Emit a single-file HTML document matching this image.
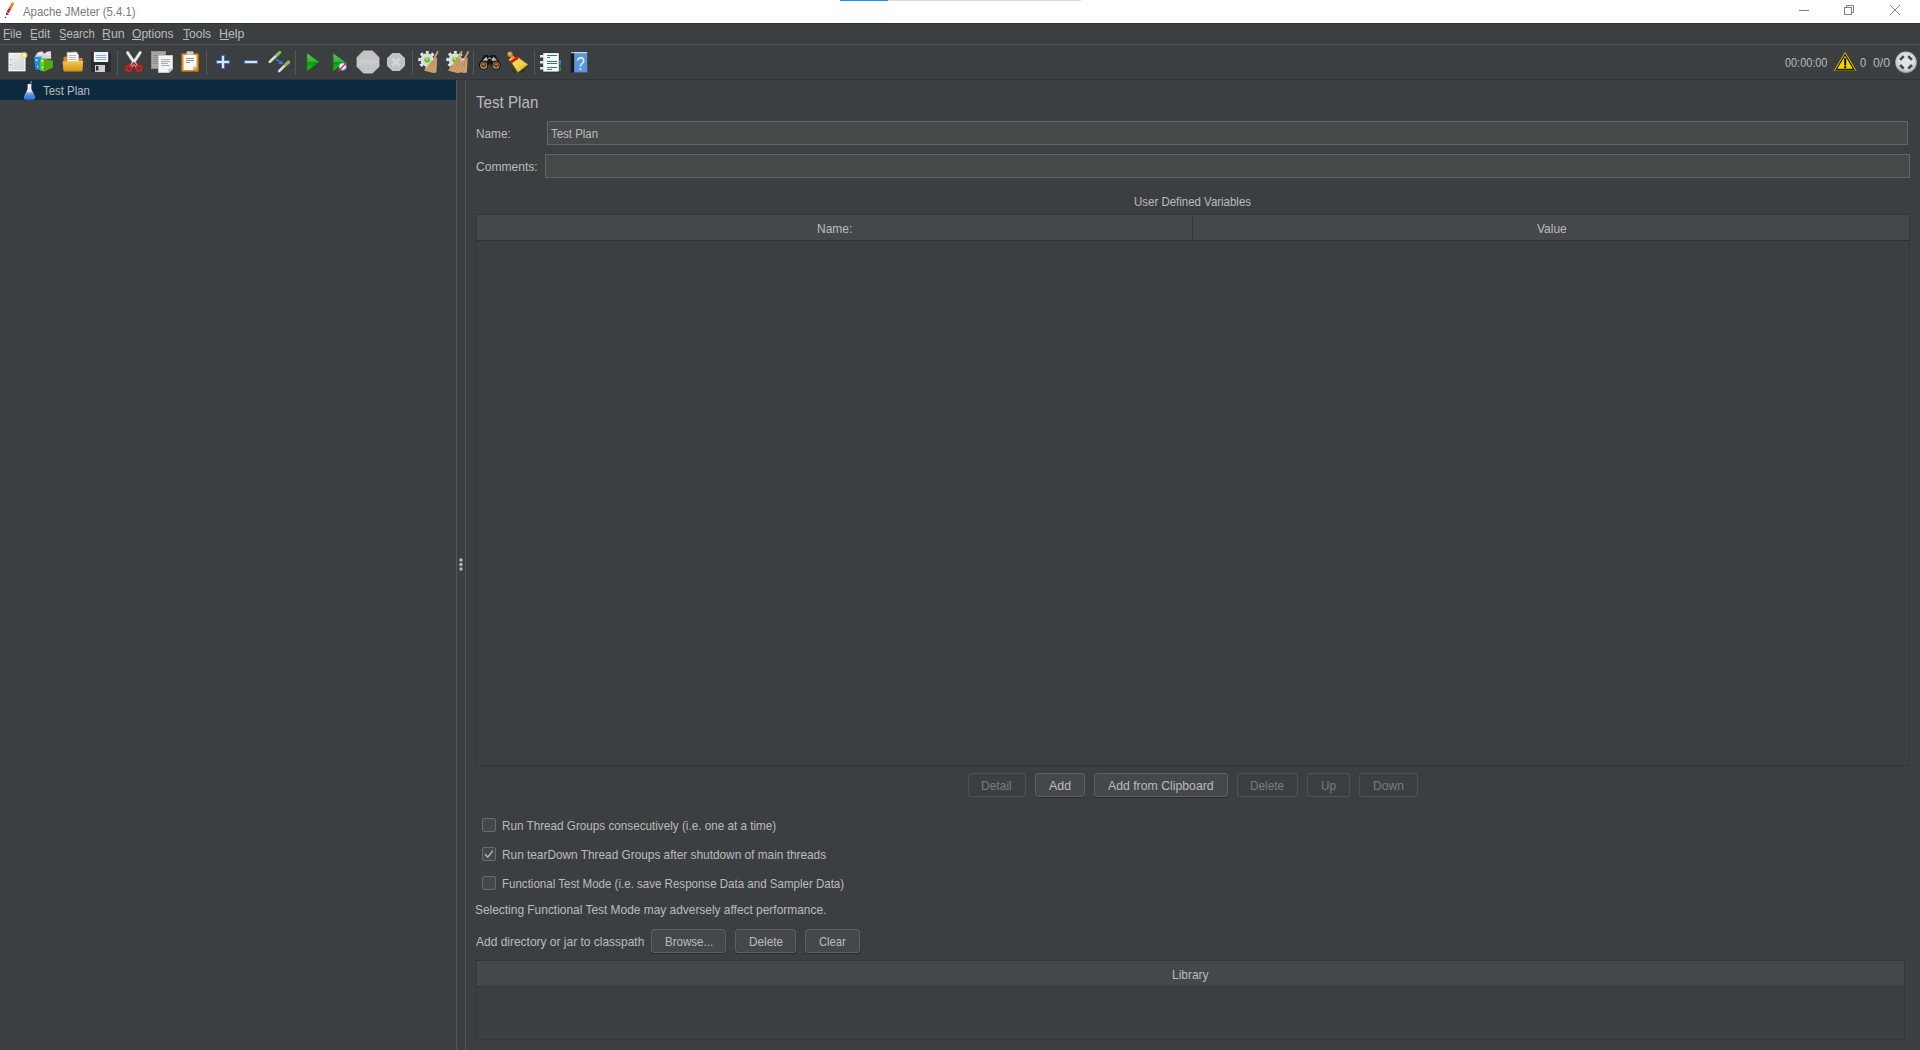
<!DOCTYPE html>
<html><head><meta charset="utf-8">
<style>
*{margin:0;padding:0;box-sizing:border-box}
html,body{width:1920px;height:1050px;overflow:hidden;background:#3C3F41;font-family:"Liberation Sans",sans-serif;font-size:13px;color:#BBBBBB}
.a{position:absolute}
.t{position:absolute;white-space:pre;line-height:1;transform-origin:0 0}
.btn{position:absolute;height:24px;border:1px solid #5E6060;border-radius:3px;background:#45484A;box-shadow:0 1px 1px rgba(0,0,0,.3)}
.btn.dis{border-color:#4F5254;background:#3C3F41;box-shadow:none}
.fld{position:absolute;height:24px;border:1px solid #646464;background:#45494A}
.tbl{position:absolute;border:1px solid #35383A;background:#3C3F41}
.hdr{position:absolute;left:0;top:0;right:0;height:26px;background:#45484B;border-bottom:1px solid #323538}
.cb{position:absolute;width:14px;height:14px;border:1px solid #6B6B6B;border-radius:2px;background:#43494A}
.sep{position:absolute;width:1px;height:25px;top:50px;background:#555759}
.ul{position:absolute;height:1px;top:39px;background:#BBBBBB}
</style></head><body>
<div class="a" style="left:0;top:0;width:1920px;height:23px;background:#fff"></div>
<div class="a" style="left:840px;top:0;width:48px;height:1px;background:#2090FF"></div>
<div class="a" style="left:888px;top:0;width:193px;height:1px;background:#DEDEDE"></div>
<div class="a" style="left:0;top:23px;width:1920px;height:1px;background:#2F3235"></div>
<div class="a" style="left:0;top:44px;width:1920px;height:1px;background:#515354"></div>
<div class="a" style="left:0;top:79px;width:1920px;height:1px;background:#323538"></div>
<div class="ul" style="left:4px;width:6px"></div>
<div class="ul" style="left:31px;width:6px"></div>
<div class="ul" style="left:60px;width:6px"></div>
<div class="ul" style="left:103px;width:7px"></div>
<div class="ul" style="left:132px;width:9px"></div>
<div class="ul" style="left:183px;width:6px"></div>
<div class="ul" style="left:220px;width:9px"></div>
<div class="sep" style="left:117px"></div>
<div class="sep" style="left:206px"></div>
<div class="sep" style="left:295px"></div>
<div class="sep" style="left:412px"></div>
<div class="sep" style="left:473px"></div>
<div class="sep" style="left:534px"></div>
<div class="a" style="left:0;top:80px;width:456px;height:20px;background:#0D293E"></div>
<div class="a" style="left:456px;top:80px;width:1px;height:970px;background:#555758"></div>
<div class="a" style="left:465px;top:80px;width:1px;height:970px;background:#555758"></div>
<div class="fld" style="left:547px;top:121px;width:1361px"></div>
<div class="fld" style="left:545px;top:154px;width:1365px"></div>
<div class="tbl" style="left:476px;top:214px;width:1434px;height:552px"><div class="hdr"></div></div>
<div class="a" style="left:1192px;top:215px;width:1px;height:25px;background:#33363A"></div>
<div class="btn dis" style="left:968px;top:773px;width:58px"></div>
<div class="btn" style="left:1035px;top:773px;width:50px"></div>
<div class="btn" style="left:1094px;top:773px;width:134px"></div>
<div class="btn dis" style="left:1237px;top:773px;width:61px"></div>
<div class="btn dis" style="left:1307px;top:773px;width:43px"></div>
<div class="btn dis" style="left:1359px;top:773px;width:59px"></div>
<div class="cb" style="left:482px;top:818px"></div>
<div class="cb" style="left:482px;top:847px"></div>
<div class="cb" style="left:482px;top:876px"></div>
<svg class="a" style="left:482px;top:847px" width="14" height="14"><path d="M3 7.2 L5.8 10.2 L10.8 3.6" fill="none" stroke="#B5B5B5" stroke-width="1.5"/></svg>
<div class="btn" style="left:651px;top:929px;width:75px"></div>
<div class="btn" style="left:735px;top:929px;width:61px"></div>
<div class="btn" style="left:805px;top:929px;width:55px"></div>
<div class="tbl" style="left:476px;top:960px;width:1429px;height:80px"><div class="hdr"></div></div>
<svg class="a" style="left:0;top:0" width="1920" height="600" viewBox="0 0 1920 600">
<defs>
<linearGradient id="gPlay" x1="0" y1="0" x2="0" y2="1"><stop offset="0" stop-color="#6CC46C"/><stop offset="0.5" stop-color="#30B030"/><stop offset="0.52" stop-color="#0A9A0A"/><stop offset="1" stop-color="#10D010"/></linearGradient>
<linearGradient id="gFold" x1="0" y1="0" x2="0" y2="1"><stop offset="0" stop-color="#F6C65A"/><stop offset="1" stop-color="#D99410"/></linearGradient>
<linearGradient id="gDoc" x1="0" y1="0" x2="1" y2="1"><stop offset="0" stop-color="#EDEDED"/><stop offset="1" stop-color="#D4D4D4"/></linearGradient>
<radialGradient id="gBall" cx="0.5" cy="0.45" r="0.55"><stop offset="0" stop-color="#E6E6E6"/><stop offset="0.6" stop-color="#E0E0E0"/><stop offset="0.85" stop-color="#C4C4C4"/><stop offset="1" stop-color="#7A7C7E"/></radialGradient>
<linearGradient id="gBroom" x1="0" y1="0" x2="1" y2="1"><stop offset="0" stop-color="#FFF07A"/><stop offset="1" stop-color="#D8B000"/></linearGradient>
</defs>
<!-- title feather -->
<path d="M6 12.3 L9.2 14.6 L6.2 15.2 Z" fill="#6E1C86"/>
<path d="M7.6 12.6 L10.8 7.2" stroke="#D21E3C" stroke-width="2.6"/>
<path d="M10.4 8 L12.6 3.6" stroke="#F47A1E" stroke-width="2.5" stroke-linecap="round"/>
<circle cx="5.5" cy="17.4" r="0.7" fill="#3C1A80"/>
<!-- window controls -->
<rect x="1799" y="10" width="10" height="1" fill="#7E7E7E"/>
<rect x="1844.5" y="7.5" width="7" height="7" fill="none" stroke="#7E7E7E" stroke-width="1"/>
<path d="M1846.5 7 V5.5 H1853.5 V12.5 H1852" fill="none" stroke="#7E7E7E" stroke-width="1"/>
<path d="M1890 5 L1900 15 M1900 5 L1890 15" stroke="#7E7E7E" stroke-width="0.9"/>
<!-- 1 new -->
<rect x="9.1" y="53.4" width="15.8" height="17.3" fill="url(#gDoc)" stroke="#FAFAFA" stroke-width="1.3"/>
<circle cx="10.6" cy="59.5" r="0.6" fill="#777"/><circle cx="10.6" cy="64.5" r="0.6" fill="#777"/>
<circle cx="24.3" cy="55.3" r="2.3" fill="#F4F2FF" stroke="#EEDC60" stroke-width="1.5" opacity="0.95"/>
<!-- 2 templates -->
<path d="M35 56.5 L37.5 52.5 L42 51.3 L44.5 53.5 L47.5 51.5 L51 51.3 L51.2 58.8 L35 58.8 Z" fill="#D6D6DA"/>
<path d="M38 53.5 L41 52.6 M39 55 L42 54 M46 53 L49.5 52.5 M46.5 55 L50 54.2" stroke="#F4F4F4" stroke-width="0.9"/>
<path d="M34 57 L41.6 56.4 L40.6 70 L35.6 69.6 Z" fill="#1A8EE0"/>
<rect x="35.6" y="59.4" width="2" height="1.6" fill="#D8ECFA"/><circle cx="37.6" cy="66.5" r="0.75" fill="#F0F8FF"/>
<path d="M40.2 58.6 L44.6 58.8 L44.6 71.6 L40.2 70.6 Z" fill="#74CC10"/>
<path d="M44.6 58.8 L52.9 60.8 L52.9 67.6 L44.6 71.6 Z" fill="#4EAE12"/>
<rect x="41.5" y="60.2" width="1.8" height="1.8" fill="#E8F8D8"/><circle cx="42.5" cy="67.5" r="0.8" fill="#FFFFFF"/>
<!-- 3 open -->
<path d="M63.5 57 L69 56 L71 58 L82.5 58 L82.5 70 L63.5 70 Z" fill="#D49210"/>
<path d="M67 52.5 L76.5 52 L78.5 55 L78.5 63 L67.5 63 Z" fill="#F6F6F6" stroke="#BDBDBD" stroke-width="0.6"/>
<path d="M69 55.5 H76 M69 57.5 H76 M69 59.5 H76" stroke="#AAAAAA" stroke-width="0.8"/>
<path d="M62.5 61.5 L83.2 61 L82.2 71.5 L63.8 71.5 Z" fill="url(#gFold)"/>
<!-- 4 save -->
<rect x="91" y="52" width="20" height="20" rx="1" fill="#2C2C2C"/>
<rect x="93.8" y="52" width="14.4" height="10" fill="#EEF3F8"/>
<path d="M96 55.5 H106 M96 57.5 H106 M96 59.5 H106" stroke="#86A6CC" stroke-width="0.9"/>
<rect x="95" y="65" width="10" height="7" fill="#CFCFCF"/>
<rect x="96" y="66" width="2.4" height="4.5" fill="#2E2E2E"/>
<!-- 5 cut -->
<path d="M127.6 52.6 L136.6 66.2" stroke="#9C9C9C" stroke-width="3.4" stroke-linecap="round"/>
<path d="M140.2 52.6 L131.2 66.2" stroke="#9C9C9C" stroke-width="3.4" stroke-linecap="round"/>
<path d="M127.6 52.6 L136.6 66.2" stroke="#EEEEEE" stroke-width="2.2" stroke-linecap="round"/>
<path d="M140.2 52.6 L131.2 66.2" stroke="#EEEEEE" stroke-width="2.2" stroke-linecap="round"/>
<circle cx="128.9" cy="68.3" r="2.7" fill="none" stroke="#E41616" stroke-width="1.9"/>
<circle cx="138.9" cy="68.3" r="2.7" fill="none" stroke="#E41616" stroke-width="1.9"/>
<path d="M131.5 65.5 L133.9 63 L136.3 65.5" fill="none" stroke="#D01010" stroke-width="1.6"/>
<!-- 6 copy -->
<rect x="151.5" y="51.5" width="14" height="17" fill="#A6A6A6" stroke="#8E8E8E" stroke-width="1"/>
<path d="M153 55.5 H163 M153 57.5 H163 M153 59.5 H163 M153 61.5 H163 M153 63.5 H163" stroke="#8C8C8C" stroke-width="1"/>
<path d="M158.5 55.5 H172.5 V69 L169 72.5 H158.5 Z" fill="#F4F4F4" stroke="#C8C8C8" stroke-width="1"/>
<path d="M161 59.5 H170 M161 61.5 H170 M161 63.5 H168 M161 65.5 H170" stroke="#ABABAB" stroke-width="1"/>
<path d="M169 72.5 L169 69 L172.5 69" fill="#D8D8D8" stroke="#B0B0B0" stroke-width="0.8"/>
<!-- 7 paste -->
<rect x="181.5" y="53.5" width="17" height="18" rx="1" fill="#D8901E" stroke="#A46A00" stroke-width="1"/>
<path d="M183.5 55 H196.5 V67 L193.5 70 H183.5 Z" fill="#F8F8F8"/>
<path d="M186 58.5 H194 M186 60.5 H194 M186 62.5 H190" stroke="#8E8E8E" stroke-width="1"/>
<path d="M193.5 70 V67 H196.5" fill="#DADADA" stroke="#A8A8A8" stroke-width="0.8"/>
<rect x="186.5" y="51.2" width="7" height="3.8" rx="1" fill="#C8C8BE"/>
<!-- 8 plus -->
<path d="M221.5 55.5 H224.5 V60.5 H229.5 V63.5 H224.5 V68.5 H221.5 V63.5 H216.5 V60.5 H221.5 Z" fill="#DCE6F6" stroke="#3A6EC2" stroke-width="1"/>
<!-- 9 minus -->
<rect x="244.5" y="60.5" width="13" height="3" fill="#DCE6F6" stroke="#3A6EC2" stroke-width="1"/>
<!-- 10 toggle -->
<path d="M269.8 61.8 L277 55" stroke="#DADADA" stroke-width="2.6" stroke-linecap="round"/>
<path d="M276.8 55.2 L279.8 52.4" stroke="#7CC254" stroke-width="3.2" stroke-linecap="round"/>
<path d="M279.2 71 L285.8 64.6" stroke="#DADADA" stroke-width="2.6" stroke-linecap="round"/>
<path d="M285.6 64.8 L288.6 62" stroke="#7CC254" stroke-width="3.2" stroke-linecap="round"/>
<path d="M276 59 L280.5 62.5" stroke="#3A8AF0" stroke-width="1.1"/>
<path d="M278.5 64 L282.8 64.2 L281.8 60.5 Z" fill="#2A86F8"/>
<!-- 11 play -->
<path d="M307 53.2 L319.2 62 L307 71 Z" fill="url(#gPlay)" stroke="#0B800B" stroke-width="0.6"/>
<!-- 12 play no timers -->
<path d="M333.2 53.2 L345.4 62 L333.2 71 Z" fill="url(#gPlay)" stroke="#0B800B" stroke-width="0.6"/>
<circle cx="342.6" cy="66.6" r="3.8" fill="#F4F4F4" stroke="#3A7AD0" stroke-width="1.1"/>
<path d="M338.2 71.3 L346.9 62.2" stroke="#E02828" stroke-width="1.3"/>
<!-- 13 stop -->
<path d="M363.5 51 H372.5 L379 57.5 V66.5 L372.5 73 H363.5 L357 66.5 V57.5 Z" fill="#C4C4C4" stroke="#D2D2D2" stroke-width="0.8"/>
<text x="358.8" y="65.3" font-family="Liberation Sans" font-weight="bold" font-size="8" fill="#D4D4D4" textLength="18.5" lengthAdjust="spacingAndGlyphs">STOP</text>
<!-- 14 shutdown -->
<path d="M392.3 53 H399.7 L405 58.3 V65.7 L399.7 71 H392.3 L387 65.7 V58.3 Z" fill="#C2C2C2"/>
<path d="M392.5 58.5 L399.5 65.5 M399.5 58.5 L392.5 65.5" stroke="#D8D8D8" stroke-width="2.6"/>
<!-- 15 clear -->
<circle cx="427.1" cy="59.8" r="6.6" fill="#E2E2E2"/>
<circle cx="427.1" cy="59.8" r="7.6" fill="none" stroke="#E6E6E6" stroke-width="2.6" stroke-dasharray="3.1 2.87" stroke-dashoffset="1.55" transform="rotate(-90 427.1 59.8)"/>
<circle cx="427.1" cy="59.8" r="4.2" fill="none" stroke="#D2D2D6" stroke-width="1"/>
<circle cx="427.1" cy="59.8" r="2.9" fill="#5CC81C"/><circle cx="426.8" cy="58.8" r="1.2" fill="#B0EE80"/>
<path d="M437.6 51.8 L434 59" stroke="#C8A070" stroke-width="1.8" stroke-linecap="round"/>
<path d="M431 61 L437.2 57.6 L436.4 72.6 L433 73 L424 70.6 Z" fill="#CFA46E"/>
<path d="M426.5 70.5 L432.5 61.5 M429.5 71.8 L434.5 60.5 M432.5 72.5 L436 59.5" stroke="#A88050" stroke-width="0.6"/>
<!-- 16 clear all -->
<circle cx="455.2" cy="59.8" r="6.6" fill="#E2E2E2"/>
<circle cx="455.2" cy="59.8" r="7.6" fill="none" stroke="#E6E6E6" stroke-width="2.6" stroke-dasharray="3.1 2.87" stroke-dashoffset="1.55" transform="rotate(-90 455.2 59.8)"/>
<circle cx="455.2" cy="59.8" r="4.2" fill="none" stroke="#D2D2D6" stroke-width="1"/>
<circle cx="455.2" cy="59.8" r="2.9" fill="#5CC81C"/><circle cx="454.9" cy="58.8" r="1.2" fill="#B0EE80"/>
<path d="M461.6 51.8 L458 59" stroke="#C8A070" stroke-width="1.8" stroke-linecap="round"/>
<path d="M455 61 L461.2 57.6 L460.4 72.6 L457 73 L448 70.6 Z" fill="#CFA46E"/>
<path d="M450.5 70.5 L456.5 61.5 M453.5 71.8 L458.5 60.5 M456.5 72.5 L460 59.5" stroke="#A88050" stroke-width="0.6"/>
<path d="M468.1 51.8 L464.5 59" stroke="#C8A070" stroke-width="1.8" stroke-linecap="round"/>
<path d="M461.5 61 L467.7 57.6 L466.9 72.6 L463.5 73 L454.5 70.6 Z" fill="#CFA46E"/>
<path d="M457.0 70.5 L463.0 61.5 M460.0 71.8 L465.0 60.5 M463.0 72.5 L466.5 59.5" stroke="#A88050" stroke-width="0.6"/>
<!-- 17 binoculars -->
<path d="M484 55 L488 55 L489.6 57 L491.2 55 L495.2 55 L499.5 62 L501 66 L496 69.6 L492 66 L489.6 64 L487.2 66 L483.5 69.6 L478.6 66 L480 62 Z" fill="#141414"/>
<path d="M481.5 61.5 L486 56.8 L488.2 59.8 L484.5 62.5 Z" fill="#B4B4B4"/>
<path d="M498 61.5 L493.5 56.8 L491.2 59.8 L495 62.5 Z" fill="#B4B4B4"/>
<rect x="487.8" y="57.4" width="3.6" height="1.6" rx="0.8" fill="#8A8A8A"/>
<circle cx="483.7" cy="65" r="4.6" fill="#141414"/><circle cx="496.1" cy="65" r="4.6" fill="#141414"/><circle cx="483.7" cy="65.2" r="3.4" fill="#D0D0D0"/><circle cx="496.1" cy="65.2" r="3.4" fill="#D0D0D0"/>
<circle cx="483.7" cy="64.8" r="3" fill="#7A3A0A"/><circle cx="496.1" cy="64.8" r="3" fill="#7A3A0A"/>
<ellipse cx="483.2" cy="64.2" rx="1.8" ry="1" fill="#C07030"/><ellipse cx="496.4" cy="64.2" rx="1.8" ry="1" fill="#C07030"/>
<!-- 18 broom -->
<ellipse cx="519" cy="71" rx="7" ry="2" fill="#000" opacity="0.18"/>
<path d="M511.5 62.2 L518 57.6 L527.8 64.4 L517.8 72.4 Z" fill="url(#gBroom)" stroke="#B89800" stroke-width="0.6"/>
<path d="M516 63.5 L520 70 M519 62 L523.5 67.5 M521.5 60.5 L526 65" stroke="#F8F090" stroke-width="0.6"/>
<path d="M508.5 60 L513 55.6 L516 59 L511.5 62 Z" fill="#E8D030"/>
<path d="M511 61.9 L517.8 57.6" stroke="#E01414" stroke-width="3"/>
<path d="M510 54.2 L513 57.5" stroke="#D48A28" stroke-width="2.4"/><circle cx="510" cy="54.2" r="2.6" fill="#D48A28"/><circle cx="509.8" cy="54" r="1.2" fill="#F0C070"/>
<!-- 19 function helper -->
<rect x="542.8" y="52.7" width="16.4" height="19.3" fill="#FFFFFF" stroke="#1E1E1E" stroke-width="0.8"/>
<path d="M547 55.5 H557 M547 57.5 H550 M547 61.5 H557 M547 63.5 H557 M547 67.5 H557 M547 69.5 H552" stroke="#1E6EF0" stroke-width="1.1"/>
<rect x="540" y="55" width="4.5" height="2.5" fill="#E4E4E4"/><rect x="540" y="61" width="4.5" height="2.5" fill="#E4E4E4"/><rect x="540" y="67" width="4.5" height="2.5" fill="#E4E4E4"/>
<rect x="559.2" y="60" width="1.8" height="5" fill="#3A7AE0"/><rect x="559.2" y="66" width="1.8" height="5" fill="#12A012"/>
<!-- 20 help -->
<rect x="570.8" y="52" width="3.4" height="20.4" fill="#1A1A1A"/>
<rect x="574.2" y="52" width="13" height="20.4" fill="#5A96E0"/>
<rect x="571" y="52.2" width="16" height="1" fill="#E8E8E8"/>
<text x="580.6" y="69.8" font-family="Liberation Sans" font-size="19" fill="#EEF4FF" text-anchor="middle" transform="translate(580.6 0) scale(0.8 1) translate(-580.6 0)">?</text>
<!-- status -->
<path d="M1845.1 51.8 L1856.4 70.8 H1833.8 Z" fill="#DCC000"/>
<path d="M1845.1 54.6 L1853.9 69.4 H1836.3 Z" fill="#F6D600" stroke="#1C1A00" stroke-width="1.1" stroke-linejoin="miter"/>
<rect x="1835" y="69.9" width="20.4" height="1.2" fill="#6A5A12"/>
<rect x="1844.2" y="58.2" width="2" height="7.3" fill="#0A0A0A"/><rect x="1844.1" y="66.3" width="2.2" height="1.8" fill="#0A0A0A"/>
<circle cx="1906" cy="62.4" r="10.8" fill="url(#gBall)"/>
<rect x="1899.30" y="56.70" width="5.2" height="2.6" fill="#474747" transform="rotate(-45 1901.90 58.00)"/><rect x="1907.50" y="56.70" width="5.2" height="2.6" fill="#474747" transform="rotate(45 1910.10 58.00)"/><rect x="1899.30" y="65.50" width="5.2" height="2.6" fill="#474747" transform="rotate(45 1901.90 66.80)"/><rect x="1907.50" y="65.50" width="5.2" height="2.6" fill="#474747" transform="rotate(-45 1910.10 66.80)"/>
<!-- tree flask -->
<linearGradient id="gFl" x1="0" y1="0" x2="0" y2="1"><stop offset="0" stop-color="#8AB0EC"/><stop offset="0.5" stop-color="#4A88EE"/><stop offset="1" stop-color="#1478FF"/></linearGradient>
<linearGradient id="gGl" x1="0" y1="0" x2="1" y2="0"><stop offset="0" stop-color="#B8B8B8"/><stop offset="0.4" stop-color="#F4F4F4"/><stop offset="1" stop-color="#C8C8C8"/></linearGradient>
<path d="M27.6 84 H31.4 V89 L35 97 Q35.4 99.3 33 99.3 H26 Q23.6 99.3 24 97 L27.6 89 Z" fill="url(#gGl)"/>
<path d="M26.3 92.3 H32.7 L35 97 Q35.4 99.3 33 99.3 H26 Q23.6 99.3 24 97 Z" fill="url(#gFl)"/>
<path d="M30.5 84 L31.8 81" stroke="#9A9A9A" stroke-width="1"/>
<!-- splitter dots -->
<circle cx="461" cy="560" r="1.7" fill="#B8B8B8"/><circle cx="461" cy="564.5" r="1.7" fill="#B8B8B8"/><circle cx="461" cy="569" r="1.7" fill="#B8B8B8"/>
</svg>

<div class="t" style="left:23.30px;top:5.00px;font-size:13px;color:#7A7A7A;transform:scale(0.8750,1.0000);">Apache JMeter (5.4.1)</div>
<div class="t" style="left:3.16px;top:27.00px;font-size:13px;color:#BBBBBB;transform:scale(0.8970,1.0000);">File</div>
<div class="t" style="left:30.20px;top:27.00px;font-size:13px;color:#BBBBBB;transform:scale(0.9000,1.0000);">Edit</div>
<div class="t" style="left:59.23px;top:27.00px;font-size:13px;color:#BBBBBB;transform:scale(0.8675,1.0000);">Search</div>
<div class="t" style="left:102.05px;top:27.00px;font-size:13px;color:#BBBBBB;transform:scale(0.9500,1.0000);">Run</div>
<div class="t" style="left:132.00px;top:27.00px;font-size:13px;color:#BBBBBB;transform:scale(0.9289,1.0000);">Options</div>
<div class="t" style="left:183.00px;top:27.00px;font-size:13px;color:#BBBBBB;transform:scale(0.9267,1.0000);">Tools</div>
<div class="t" style="left:219.05px;top:27.00px;font-size:13px;color:#BBBBBB;transform:scale(0.9500,1.0000);">Help</div>
<div class="t" style="left:43.30px;top:84.00px;font-size:13px;color:#BBBBBB;transform:scale(0.8774,1.0000);">Test Plan</div>
<div class="t" style="left:476.20px;top:94.16px;font-size:15px;color:#BBBBBB;transform:scale(1.0098,1.0800);">Test Plan</div>
<div class="t" style="left:475.79px;top:127.00px;font-size:13px;color:#BBBBBB;transform:scale(0.9068,1.0000);">Name:</div>
<div class="t" style="left:551.10px;top:127.00px;font-size:13px;color:#BBBBBB;transform:scale(0.8802,1.0000);">Test Plan</div>
<div class="t" style="left:476.30px;top:160.00px;font-size:13px;color:#BBBBBB;transform:scale(0.9273,1.0000);">Comments:</div>
<div class="t" style="left:1133.62px;top:195.00px;font-size:13px;color:#BBBBBB;transform:scale(0.8818,1.0000);">User Defined Variables</div>
<div class="t" style="left:817.38px;top:222.00px;font-size:13px;color:#BBBBBB;transform:scale(0.9243,1.0000);">Name:</div>
<div class="t" style="left:1537.00px;top:222.00px;font-size:13px;color:#BBBBBB;transform:scale(0.9219,1.0000);">Value</div>
<div class="t" style="left:981.48px;top:779.00px;font-size:13px;color:#7B7B7B;transform:scale(0.9250,1.0000);">Detail</div>
<div class="t" style="left:1049.00px;top:779.00px;font-size:13px;color:#BBBBBB;transform:scale(0.9565,1.0000);">Add</div>
<div class="t" style="left:1108.40px;top:779.00px;font-size:13px;color:#BBBBBB;transform:scale(0.9429,1.0000);">Add from Clipboard</div>
<div class="t" style="left:1250.39px;top:779.00px;font-size:13px;color:#7B7B7B;transform:scale(0.9083,1.0000);">Delete</div>
<div class="t" style="left:1320.70px;top:779.00px;font-size:13px;color:#7B7B7B;transform:scale(0.9000,1.0000);">Up</div>
<div class="t" style="left:1372.57px;top:779.00px;font-size:13px;color:#7B7B7B;transform:scale(0.9281,1.0000);">Down</div>
<div class="t" style="left:501.90px;top:819.00px;font-size:13px;color:#BBBBBB;transform:scale(0.9000,1.0000);">Run Thread Groups consecutively (i.e. one at a time)</div>
<div class="t" style="left:501.89px;top:848.00px;font-size:13px;color:#BBBBBB;transform:scale(0.9104,1.0000);">Run tearDown Thread Groups after shutdown of main threads</div>
<div class="t" style="left:501.91px;top:877.00px;font-size:13px;color:#BBBBBB;transform:scale(0.8872,1.0000);">Functional Test Mode (i.e. save Response Data and Sampler Data)</div>
<div class="t" style="left:475.28px;top:903.00px;font-size:13px;color:#BBBBBB;transform:scale(0.9168,1.0000);">Selecting Functional Test Mode may adversely affect performance.</div>
<div class="t" style="left:476.20px;top:935.00px;font-size:13px;color:#BBBBBB;transform:scale(0.9209,1.0000);">Add directory or jar to classpath</div>
<div class="t" style="left:664.51px;top:935.00px;font-size:13px;color:#BBBBBB;transform:scale(0.8885,1.0000);">Browse...</div>
<div class="t" style="left:748.69px;top:935.00px;font-size:13px;color:#BBBBBB;transform:scale(0.9056,1.0000);">Delete</div>
<div class="t" style="left:819.30px;top:935.00px;font-size:13px;color:#BBBBBB;transform:scale(0.8613,1.0000);">Clear</div>
<div class="t" style="left:1171.58px;top:968.00px;font-size:13px;color:#BBBBBB;transform:scale(0.9179,1.0000);">Library</div>
<div class="t" style="left:1785.10px;top:56.00px;font-size:13px;color:#BBBBBB;transform:scale(0.8380,1.0000);">00:00:00</div>
<div class="t" style="left:1860.00px;top:56.00px;font-size:13px;color:#BBBBBB;transform:scale(0.8571,1.0000);">0</div>
<div class="t" style="left:1873.00px;top:56.00px;font-size:13px;color:#BBBBBB;transform:scale(0.9500,1.0000);">0/0</div>
</body></html>
